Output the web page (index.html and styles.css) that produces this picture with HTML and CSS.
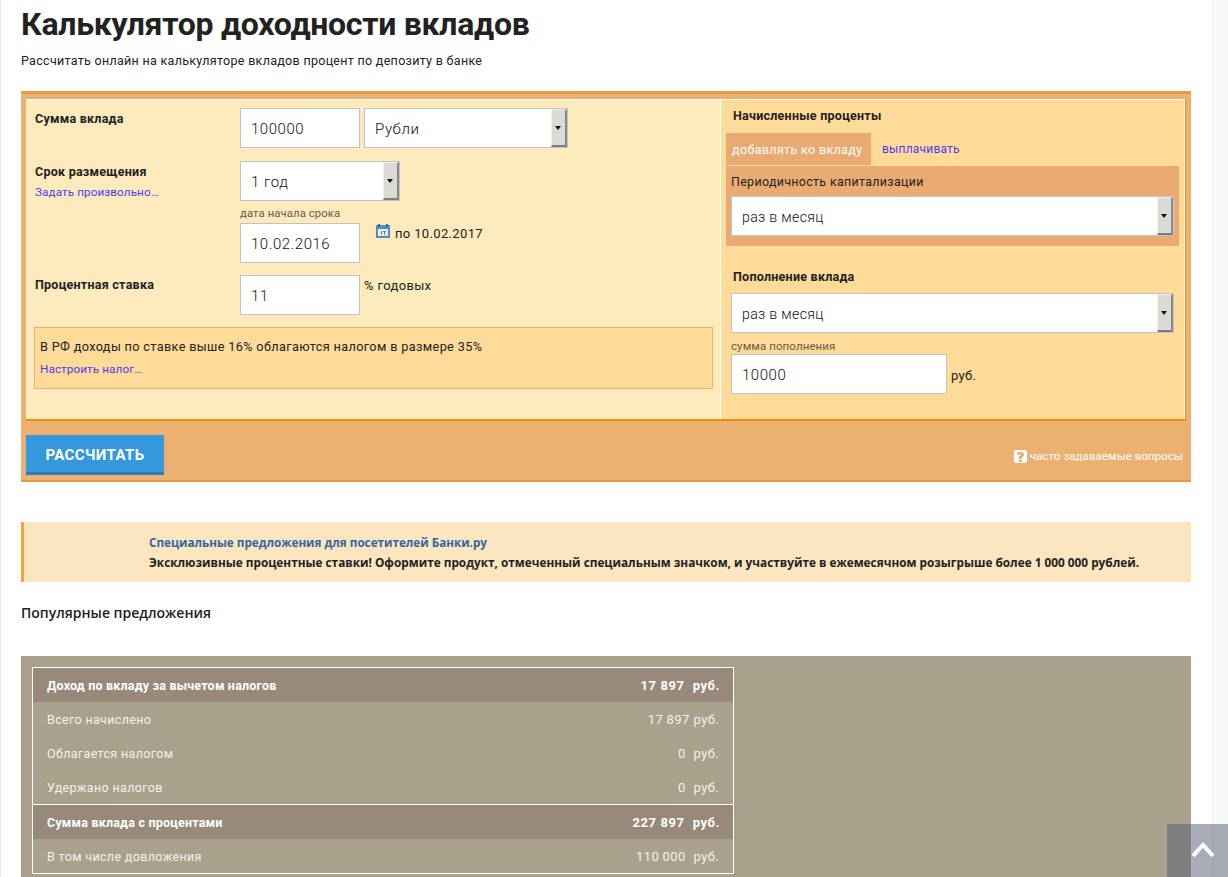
FILE: index.html
```html
<!DOCTYPE html>
<html lang="ru">
<head>
<meta charset="utf-8">
<title>Калькулятор доходности вкладов</title>
<link rel="stylesheet" href="styles.css">
</head>
<body>
<div class="page">
  <main class="main">
    <h1 class="title">Калькулятор доходности вкладов</h1>
    <p class="subtitle">Рассчитать онлайн на калькуляторе вкладов процент по депозиту в банке</p>

    <section class="calc">
      <div class="panels">
        <div class="left">
          <div class="row row-sum">
            <div class="label"><b>Сумма вклада</b></div>
            <div class="fields">
              <div class="input w120">100000</div>
              <div class="select w204">Рубли<span class="arrow"></span></div>
            </div>
          </div>
          <div class="row row-term">
            <div class="label"><b>Срок размещения</b><a class="link small" href="#">Задать произвольно…</a></div>
            <div class="stack">
              <div class="select w160">1 год<span class="arrow"></span></div>
              <div class="hint date-hint">дата начала срока</div>
              <div class="fields">
                <div class="input w120">10.02.2016</div>
                <div class="until">
                  <svg class="cal" width="14" height="14" viewBox="0 0 14 14"><rect x="0" y="1" width="14" height="13" fill="#4f8fc4"/><rect x="2" y="0" width="2" height="3" fill="#2f6da3"/><rect x="10" y="0" width="2" height="3" fill="#2f6da3"/><rect x="2" y="5" width="10" height="7" fill="#e9f1f7"/><rect x="5" y="7" width="1" height="4" fill="#5a7f9f"/><rect x="7" y="7" width="3" height="1" fill="#5a7f9f"/><rect x="8" y="8" width="1" height="3" fill="#5a7f9f"/></svg>
                  <span>по 10.02.2017</span>
                </div>
              </div>
            </div>
          </div>
          <div class="row row-rate">
            <div class="label"><b>Процентная ставка</b></div>
            <div class="fields">
              <div class="input w120">11</div>
              <span class="unit">% годовых</span>
            </div>
          </div>
          <div class="tax">
            <div class="tax-text">В РФ доходы по ставке выше 16% облагаются налогом в размере 35%</div>
            <a class="link small" href="#">Настроить налог…</a>
          </div>
        </div>
        <div class="right">
          <div class="heading">Начисленные проценты</div>
          <div class="tabs">
            <span class="tab-on">добавлять ко вкладу</span>
            <a class="link tab-link" href="#">выплачивать</a>
          </div>
          <div class="cap-box">
            <div class="cap-label">Периодичность капитализации</div>
            <div class="select wfull">раз в месяц<span class="arrow"></span></div>
          </div>
          <div class="heading heading-2">Пополнение вклада</div>
          <div class="refill">
            <div class="select wfull">раз в месяц<span class="arrow"></span></div>
            <div class="hint refill-hint">сумма пополнения</div>
            <div class="fields">
              <div class="input w216">10000</div>
              <span class="unit rub">руб.</span>
            </div>
          </div>
        </div>
      </div>
      <div class="calc-foot">
        <button class="btn" type="button">РАССЧИТАТЬ</button>
        <a class="faq" href="#">
          <svg width="13" height="13" viewBox="0 0 13 13"><path d="M1 0h11v1h1v11h-1v1H1v-1H0V1h1z" fill="#fff"/><path d="M3 5V3h1V2h5v1h1v3H9v1H8v2H5V6h1V5h1V4H6v1zM5 10h3v2H5z" fill="#ecb170"/></svg>
          <span>часто задаваемые вопросы</span>
        </a>
      </div>
    </section>

    <section class="promo">
      <a class="promo-link" href="#">Специальные предложения для посетителей Банки.ру</a>
      <div class="promo-text">Эксклюзивные процентные ставки! Оформите продукт, отмеченный специальным значком, и участвуйте в ежемесячном розыгрыше более 1 000 000 рублей.</div>
    </section>

    <h2 class="popular">Популярные предложения</h2>

    <section class="results">
      <div class="table">
        <div class="tr strong"><span>Доход по вкладу за вычетом налогов</span><span class="val"><span>17 897</span><span class="cur">руб.</span></span></div>
        <div class="tr"><span>Всего начислено</span><span class="val"><span>17 897</span><span class="cur tight">руб.</span></span></div>
        <div class="tr"><span>Облагается налогом</span><span class="val"><span>0</span><span class="cur">руб.</span></span></div>
        <div class="tr"><span>Удержано налогов</span><span class="val"><span>0</span><span class="cur">руб.</span></span></div>
        <div class="tr strong divided"><span>Сумма вклада с процентами</span><span class="val"><span>227 897</span><span class="cur">руб.</span></span></div>
        <div class="tr"><span>В том числе довложения</span><span class="val"><span>110 000</span><span class="cur">руб.</span></span></div>
      </div>
    </section>
  </main>
  <aside class="side"></aside>
</div>
<a class="to-top" href="#" aria-label="Наверх">
  <svg width="24" height="17" viewBox="0 0 24 17"><path d="M2 15 12 4l10 11" fill="none" stroke="#fff" stroke-width="4"/></svg>
</a>
</body>
</html>
```
FILE: styles.css
```css
* { box-sizing: border-box; }
html, body { margin: 0; height: 877px; overflow: hidden; }
body { background: #fff; color: #222; font: 300 13px/17px Roboto, "Liberation Sans", sans-serif; letter-spacing: .35px; }
a { text-decoration: none; }
.page { display: flex; height: 877px; }
.main { width: 1213px; flex: none; border-left: 1px solid #e8e8e8; border-right: 1px solid #eceef0; padding: 0 21px 0 20px; }
.side { flex: 1; background: #f8f9fa; }

.title { margin: 0; padding-top: 3px; height: 43px; font: 700 32px/43px Roboto, sans-serif; letter-spacing: -.27px; color: #222; }
.subtitle { margin: 9px 0 0; height: 39px; font-size: 12.5px; line-height: 17px; font-weight: 400; letter-spacing: .3px; }

.calc { height: 391px; background: #ecb170; border-top: 3px solid #e0a03c; border-bottom: 2px solid #e0a03c; padding: 5px 5px 0 5px; }
.panels { display: flex; height: 322px; border-bottom: 2px solid #e8900c; border-right: 1px solid #e8900c; }
.left { width: 695px; background: #feebbd; border-top: 1px solid #fff; border-right: 1px solid #fff; padding: 8px 7px 0 8px; }
.right { flex: 1; background: #fedb98; border-top: 1px solid #fff; border-right: 1px solid #fff; padding: 7px 5px 0 5px; }

.row { display: flex; }
.label { width: 206px; padding-left: 1px; flex: none; }
.label b, .heading { display: block; font: 700 12.5px/17px Roboto, sans-serif; letter-spacing: .25px; color: #222; }
.row-sum { height: 53px; }
.row-sum .label { padding-top: 2px; }
.row-term { height: 114px; }
.row-term .label { padding-top: 2px; }
.row-rate { height: 52px; }
.row-rate .label { padding-top: 1px; }
.fields { display: flex; gap: 4px; align-items: flex-start; }
.stack { display: flex; flex-direction: column; }

.input, .select { position: relative; height: 40px; background: #fff; border: 1px solid #bfc3c8; padding-left: 10px; font-size: 15px; line-height: 40px; letter-spacing: .55px; color: #111; }
.w120 { width: 120px; flex: none; }
.w160 { width: 160px; }
.w204 { width: 204px; }
.w216 { width: 216px; }
.wfull { width: 100%; font-size: 14.2px; letter-spacing: .3px; }
.arrow { position: absolute; top: 0; right: 0; bottom: 0; width: 16px; background: #dcdad5; border-style: solid; border-width: 1px 2px 2px 1px; border-color: #eeedea #8a8a88 #7c7c7a #f2f1ee; }
.arrow::after { content: ""; position: absolute; left: 3px; top: 16px; border: 3.5px solid transparent; border-top: 4px solid #111; border-bottom: 0; }

.link { color: #4a3cf5; display: block; font-weight: 400; }
.small { font-size: 11.7px; line-height: 16px; letter-spacing: .1px; }
.label .small { margin-top: 4px; }
.hint { font-size: 11.3px; line-height: 14px; letter-spacing: .1px; color: #6b5a48; font-weight: 400; }
.date-hint { margin-top: 6px; height: 16px; }
.until { display: flex; align-items: flex-start; gap: 5px; padding: 2px 0 0 12px; line-height: 17px; font-weight: 400; }
.cal { margin-top: -1px; }
.unit { line-height: 17px; padding-top: 2px; font-weight: 400; }
.rub { padding-top: 13px; }

.tax { height: 62px; background: #fedb98; border: 1px solid #eeaf72; padding: 10px 5px 0 5px; width: 679px; }
.tax-text { font-size: 12.7px; font-weight: 400; }
.tax .small { margin-top: 6px; }

.heading { padding-left: 7px; line-height: 17px; }
.tabs { display: flex; align-items: center; height: 32px; margin-top: 9px; }
.tab-on { display: block; height: 32px; width: 145px; padding-left: 6px; background: #eaab72; color: #fff; font-size: 12.6px; letter-spacing: .3px; font-weight: 400; line-height: 33px; white-space: nowrap; }
.tab-link { margin-left: 11px; padding-top: 1px; font-size: 12px; letter-spacing: .2px; }
.cap-box { margin-top: 1px; height: 80px; background: #eaab72; padding: 7px 5px 0 5px; }
.cap-label { height: 23px; font-size: 12.4px; font-weight: 400; }
.heading-2 { margin-top: 22px; }
.refill { padding: 8px 5px 0 5px; }
.refill-hint { margin-top: 6px; height: 15px; line-height: 14px; font-size: 11.5px; }

.calc-foot { display: flex; justify-content: space-between; align-items: flex-start; padding-top: 14px; }
.btn { width: 138px; height: 40px; padding: 3px 0 0; background: #3498db; border: 0; border-bottom: 3px solid #2a7db8; color: #fff; font: 700 15px/20px Roboto, sans-serif; letter-spacing: .4px; }
.faq { display: flex; align-items: center; gap: 3px; margin-top: 13px; padding-right: 3px; color: #fff; font-size: 11.5px; font-weight: 400; letter-spacing: .07px; }

.promo { margin-top: 40px; height: 60px; background: #fbe6c0; border-left: 3px solid #f9a52f; padding: 10px 0 0 125px; font: 700 11.8px/20px "Open Sans", sans-serif; letter-spacing: 0; }
.promo-link { color: #33689f; display: block; font-size: 11.7px; }
.promo-text { color: #222; white-space: nowrap; }
.popular { margin: 22px 0 0; height: 52px; font: 600 14px/18px "Open Sans", sans-serif; letter-spacing: 0; color: #222; }

.results { height: 240px; background: #aaa18c; padding: 11px 0 0 11px; }
.table { width: 702px; border: 1px solid #fff; color: #f3f0ea; }
.tr { display: flex; justify-content: space-between; align-items: center; height: 34px; padding: 0 14px; font-size: 12.5px; font-weight: 400; letter-spacing: .35px; }
.val { display: flex; gap: 8px; font-size: 13px; }
.strong { background: #98897a; color: #fff; font-weight: 700; font-size: 12.5px; letter-spacing: .2px; }
.strong .val { font-size: 13px; letter-spacing: .6px; margin-right: -1px; }
.divided { border-top: 1px solid #fff; height: 35px; }
.tight { margin-left: -4px; }

.to-top { position: fixed; right: 0; bottom: 0; width: 61px; height: 53px; background: rgba(82, 92, 112, .5); display: flex; justify-content: center; padding: 17px 0 0 11px; }
```
